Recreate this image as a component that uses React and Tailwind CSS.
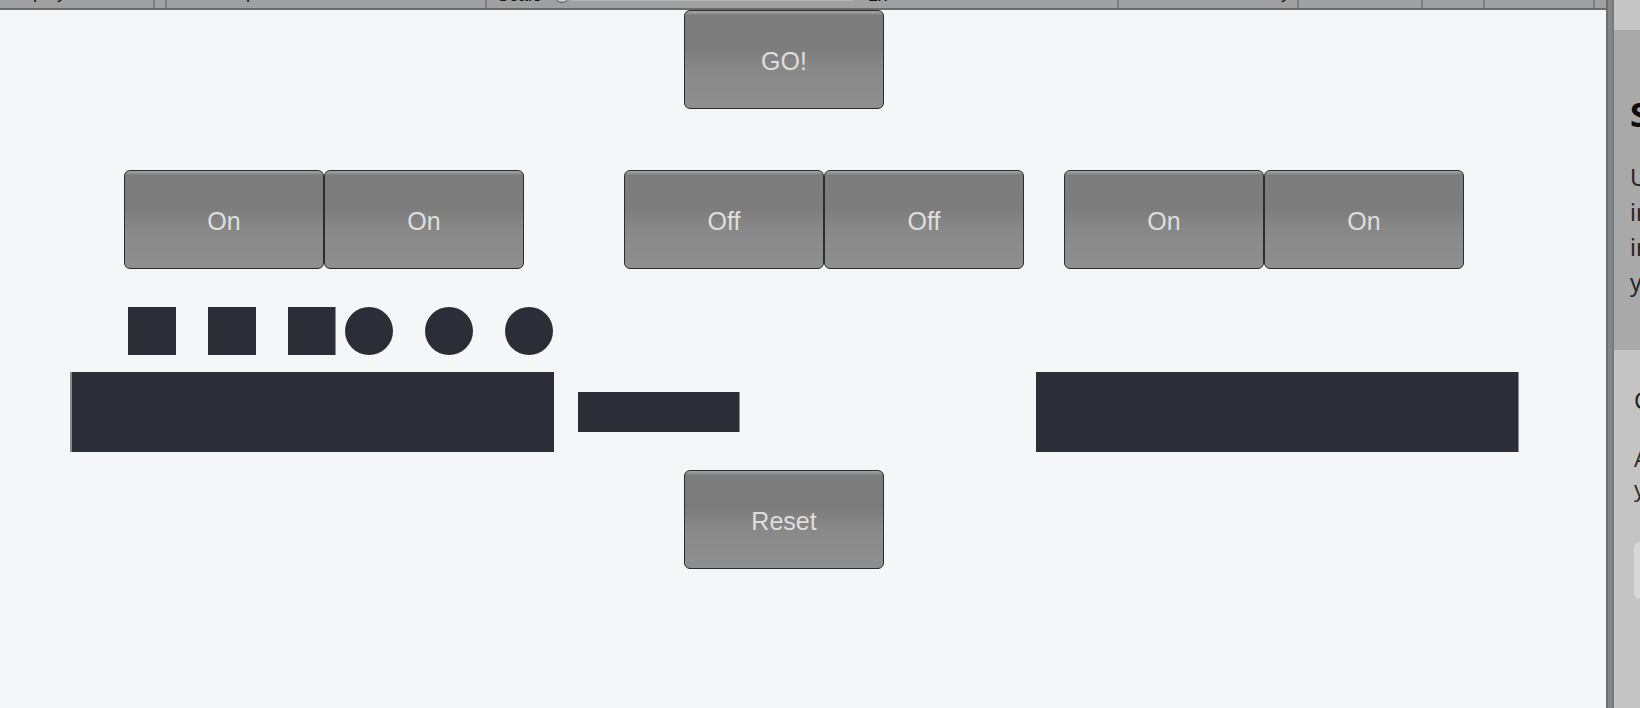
const btnBase =
  "flex items-center justify-center pt-[4px] w-[200px] h-[99px] rounded-[6px] border-[1.5px] border-[#2c2c2c] bg-[linear-gradient(to_bottom,#a2a2a2_0px,#969696_2px,#7d7d7d_4px,#7b7b7b_35%,#898989_62%,#8f8f8f_100%)] text-[25px] text-[#dedede] font-['Liberation_Sans',Arial,sans-serif]";

function GameButton({ label }) {
  return <div className={btnBase}>{label}</div>;
}

function ButtonPair({ label, className = "" }) {
  return (
    <div className={`flex ${className}`}>
      <GameButton label={label} />
      <GameButton label={label} />
    </div>
  );
}

function Toolbar() {
  return (
    <div className="flex h-[10px] shrink-0 bg-[#a0a0a0] border-b-2 border-[#6b6b6b] overflow-hidden text-[18px] leading-[24px] text-[#111] font-['Liberation_Sans',Arial,sans-serif] whitespace-nowrap">
      <div className="w-[155px] h-full border-r-2 border-[#7e7e7e] pl-[7px]">
        <div className="-mt-[20px]">Display 1</div>
      </div>
      <div className="w-[12px] h-full border-r-2 border-[#7e7e7e]" />
      <div className="w-[320px] h-full border-r-2 border-[#7e7e7e] pl-[17px]">
        <div className="-mt-[20px]">Free Aspect</div>
      </div>
      <div className="w-[632px] h-full border-r-2 border-[#7e7e7e] pl-[10px]">
        <div className="flex items-center h-[24px] -mt-[17px]">
          <span>Scale</span>
          <div className="ml-[12px] w-[16px] h-[16px] rounded-full border-[1.5px] border-[#555] bg-[#c9c9c9]" />
          <div className="w-[284px] h-[12px] rounded-[3px] bg-[#b7b7b7]" />
          <span className="ml-[14px]">1x</span>
        </div>
      </div>
      <div className="w-[180px] h-full border-r-2 border-[#7e7e7e] pl-[26px]">
        <div className="-mt-[20px]">Maximize On Play</div>
      </div>
      <div className="w-[124px] h-full border-r-2 border-[#7e7e7e] pl-[14px]">
        <div className="-mt-[20px]">Mute Audio</div>
      </div>
      <div className="w-[62px] h-full border-r-2 border-[#7e7e7e] pl-[10px]">
        <div className="-mt-[20px]">Stats</div>
      </div>
      <div className="w-[110px] h-full border-r-2 border-[#7e7e7e] pl-[12px]">
        <div className="-mt-[20px]">Gizmos</div>
      </div>
      <div className="flex-1 h-full" />
    </div>
  );
}

function Shape({ round, edge }) {
  return (
    <div
      className={`w-[48px] h-[48px] bg-[#2b2e36] ${round ? "rounded-full" : ""} ${
        edge ? "border-r border-[#8d8f93]" : ""
      }`}
    />
  );
}

function GameView() {
  return (
    <div className="w-[1606px] shrink-0 flex flex-col bg-[#f5f6f8]">
      <Toolbar />

      <div className="pl-[684px]">
        <GameButton label="GO!" />
      </div>

      <div className="mt-[61px] flex pl-[124px]">
        <ButtonPair label="On" />
        <ButtonPair label="Off" className="ml-[100px]" />
        <ButtonPair label="On" className="ml-[40px]" />
      </div>

      <div className="mt-[38px] flex pl-[128px]">
        <div className="flex gap-[32px]">
          <Shape />
          <Shape />
          <Shape edge />
        </div>
        <div className="flex gap-[32px] ml-[9px]">
          <Shape round />
          <Shape round />
          <Shape round />
        </div>
      </div>

      <div className="mt-[17px] flex items-center pl-[70px]">
        <div className="w-[484px] h-[80px] bg-[#2b2e36] border-l-2 border-[#898a8d]" />
        <div className="ml-[24px] w-[162px] h-[40px] bg-[#2b2e36] border-r border-[#8d8f93]" />
        <div className="ml-[296px] w-[483px] h-[80px] bg-[#2b2e36] border-r border-[#8d8f93]" />
      </div>

      <div className="mt-[18px] pl-[684px]">
        <GameButton label="Reset" />
      </div>
    </div>
  );
}

function Inspector() {
  return (
    <div className="w-[26px] shrink-0 flex flex-col overflow-hidden whitespace-nowrap font-['Noto_Sans',sans-serif]">
      <div className="h-[30px] shrink-0 bg-[#c5c5c5]" />
      <div className="h-[320px] shrink-0 bg-[#a9a9a9] pl-[16px] pt-[64px]">
        <div className="text-[34px] leading-[40px] font-bold text-[#0d0d0d]">Scene</div>
        <div className="mt-[26px] text-[23px] leading-[35px] text-[#262626]">
          <div>Use the buttons</div>
          <div>in the game view</div>
          <div>in order to test</div>
          <div>your setup.</div>
        </div>
      </div>
      <div className="flex-1 bg-[#c4c4c4] pl-[20px] pt-[35px]">
        <div className="text-[23px] leading-[30px] text-[#1e1e1e]">Controls</div>
        <div className="mt-[28px] text-[22px] leading-[30px] text-[#2a2a2a]">
          <div>Assign actions to</div>
          <div>your buttons.</div>
        </div>
        <div className="mt-[39px] h-[57px] w-[200px] rounded-[6px] bg-[#d8d8d8]" />
      </div>
    </div>
  );
}

export default function App() {
  return (
    <div className="flex w-[1640px] h-[708px] overflow-hidden">
      <GameView />
      <div className="w-[8px] shrink-0 bg-[#868686] border-l-2 border-[#6e6e6e] border-r-2 border-r-[#797979]" />
      <Inspector />
    </div>
  );
}
